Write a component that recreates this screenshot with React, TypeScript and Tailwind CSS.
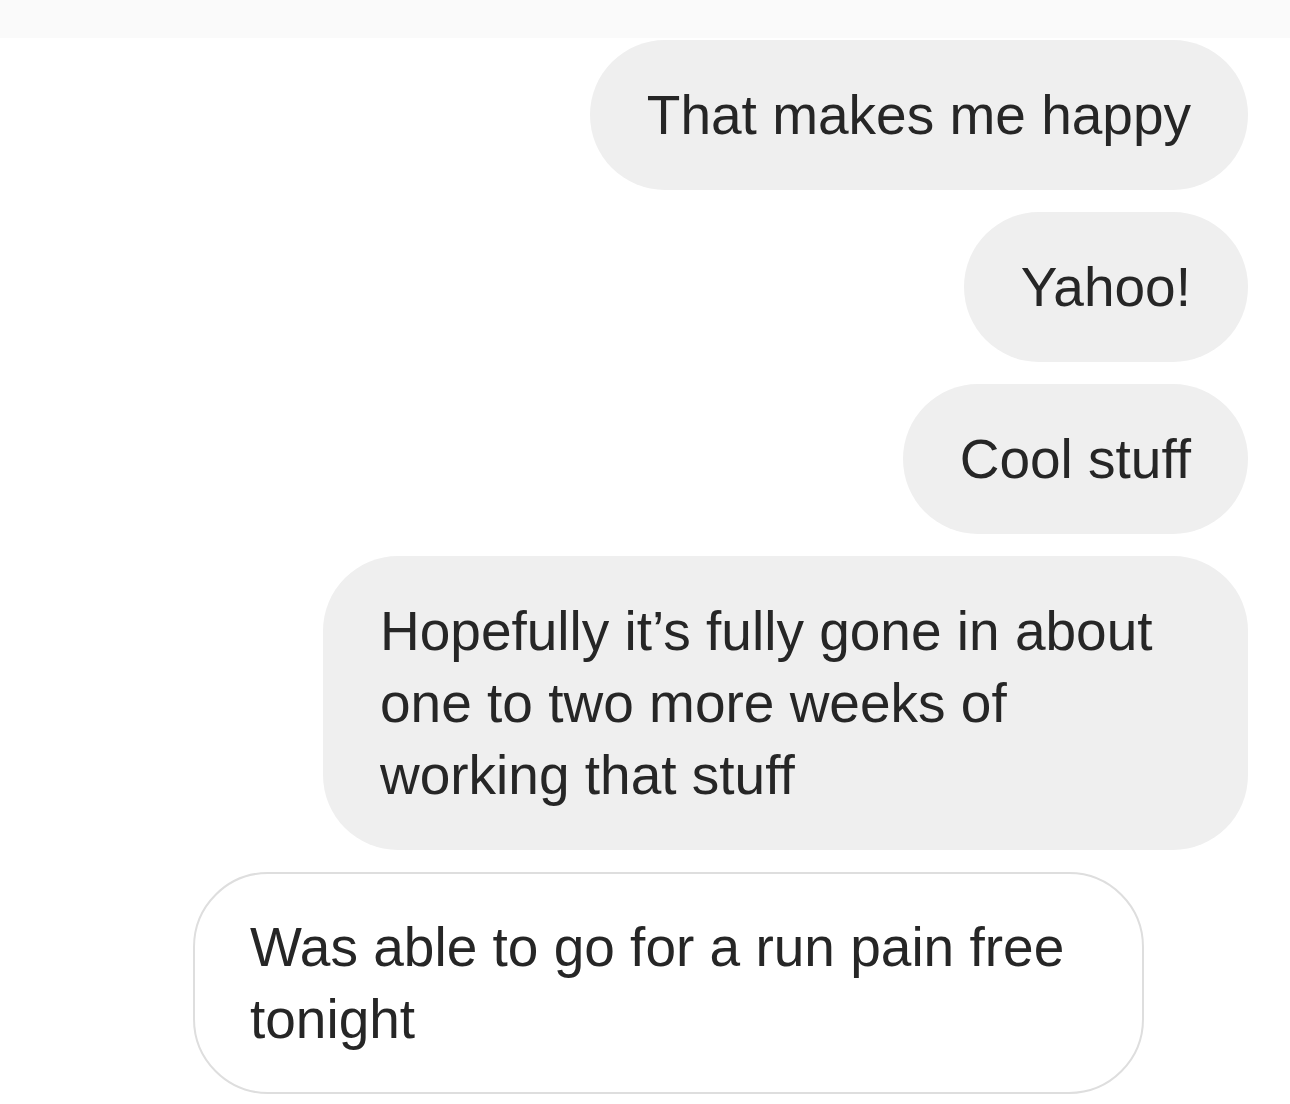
import type { ReactNode } from 'react';

type Message = {
  id: number;
  text: ReactNode;
  fromMe: boolean;
  width?: string;
};

const messages: Message[] = [
  { id: 1, text: 'That makes me happy', fromMe: true },
  { id: 2, text: 'Yahoo!', fromMe: true },
  { id: 3, text: 'Cool stuff', fromMe: true },
  {
    id: 4,
    text: 'Hopefully it\u2019s fully gone in about one to two more weeks of working that stuff',
    fromMe: true,
    width: 'w-[925px]',
  },
  {
    id: 5,
    text: 'Was able to go for a run pain free tonight',
    fromMe: false,
    width: 'w-[951px]',
  },
];

function Bubble({ msg }: { msg: Message }) {
  return (
    <div className={msg.fromMe ? 'flex justify-end' : 'flex justify-start pl-[193px]'}>
      <div
        className={[
          'rounded-[75px] text-[55px] leading-[72px] text-[#262626]',
          msg.fromMe
            ? 'bg-[#efefef] px-[57px] py-[39px]'
            : 'bg-white border-2 border-[#dedede] px-[55px] py-[37px]',
          msg.width ?? '',
        ].join(' ')}
      >
        {msg.text}
      </div>
    </div>
  );
}

export default function App() {
  return (
    <div className="min-h-[1104px] w-[1290px] bg-white overflow-hidden" style={{ fontFamily: '"Liberation Sans", Arial, sans-serif' }}>
      {/* Header strip */}
      <div className="h-[38px] bg-[#fafafa]" />

      {/* Thread */}
      <div className="flex flex-col gap-[22px] pt-[2px] pr-[42px]">
        {messages.map((m) => (
          <Bubble key={m.id} msg={m} />
        ))}
      </div>
    </div>
  );
}
